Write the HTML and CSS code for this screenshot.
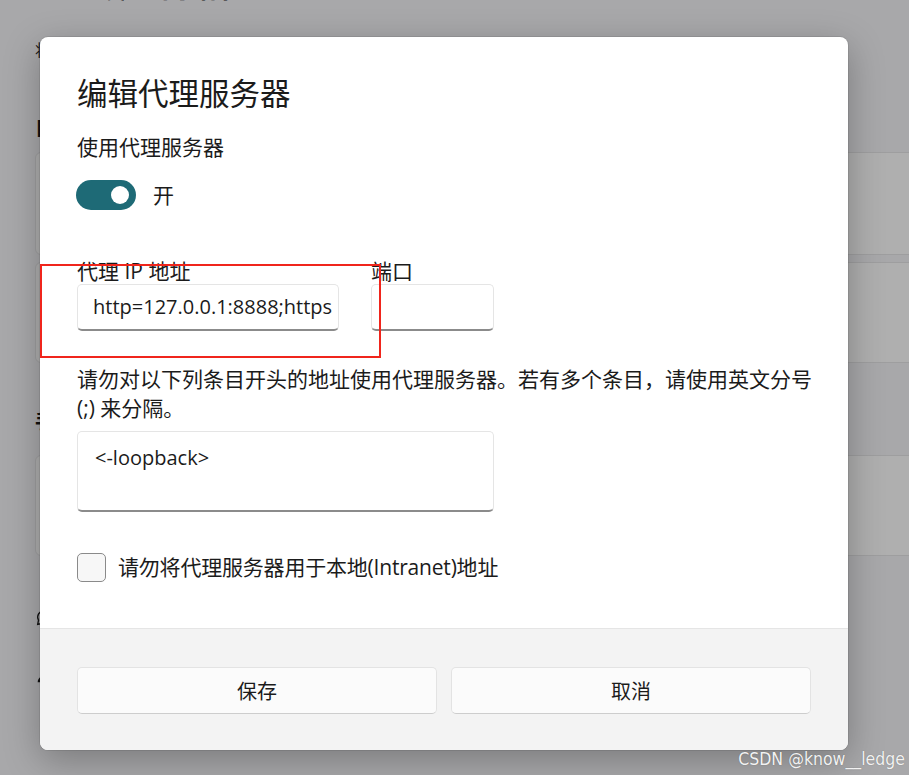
FILE: index.html
```html
<!DOCTYPE html>
<html lang="zh-CN">
<head>
<meta charset="utf-8">
<title>编辑代理服务器</title>
<link rel="stylesheet" href="styles.css">
</head>
<body>
<div class="page">
  <div class="page-title">代理 设置 网络和 Internet</div>
  <p class="page-note">将代理服务器用于以太网或 Wi-Fi 连接。这些设置不适用于 VPN 连接。</p>
  <h2 class="page-h">自动设置代理</h2>
  <div class="cards">
    <div class="card tall"></div>
    <div class="card"></div>
  </div>
  <h2 class="page-h second">手动设置代理</h2>
  <div class="cards third">
    <div class="card"></div>
  </div>
  <div class="links">
    <div class="link">
      <svg class="link-icon" viewBox="0 0 20 20" width="18" height="18"><path d="M10 2a7 7 0 0 0-6.1 10.4L3 17l4.6-.9A7 7 0 1 0 10 2z" fill="none" stroke="#1b1b1b" stroke-width="1.5"/><path d="M8 8a2 2 0 1 1 2.8 1.8c-.6.3-.8.7-.8 1.2" fill="none" stroke="#1b1b1b" stroke-width="1.4"/><circle cx="10" cy="13.3" r=".9" fill="#1b1b1b"/></svg>
      <span>获取帮助</span>
    </div>
    <div class="link">
      <svg class="link-icon" viewBox="0 0 20 20" width="18" height="18"><circle cx="10" cy="6" r="4" fill="#1b1b1b"/><path d="M3 18c0-4 3-6.5 7-6.5s7 2.5 7 6.5z" fill="#1b1b1b"/></svg>
      <span>提供反馈</span>
    </div>
  </div>
</div>

<div class="scrim"></div>

<div class="dialog">
  <div class="dlg-body">
    <h1 class="dlg-title">编辑代理服务器</h1>
    <div class="field-label">使用代理服务器</div>
    <div class="toggle-row">
      <span class="toggle"><span class="knob"></span></span>
      <span class="toggle-text">开</span>
    </div>
    <div class="addr-row">
      <div class="addr-col">
        <div class="lbl">代理 IP 地址</div>
        <div class="input ip">http=127.0.0.1:8888;https</div>
      </div>
      <div class="port-col">
        <div class="lbl">端口</div>
        <div class="input port"></div>
      </div>
    </div>
    <p class="desc">请勿对以下列条目开头的地址使用代理服务器。若有多个条目，请使用英文分号<br>(;) 来分隔。</p>
    <div class="textarea">&lt;-loopback&gt;</div>
    <div class="check-row">
      <span class="checkbox"></span>
      <span class="check-text">请勿将代理服务器用于本地(Intranet)地址</span>
    </div>
  </div>
  <div class="dlg-footer">
    <button class="btn">保存</button>
    <button class="btn">取消</button>
  </div>
</div>

<div class="annot"></div>
<div class="watermark">CSDN @know__ledge</div>
</body>
</html>
```

FILE: styles.css
```css
* { box-sizing: border-box; }

html, body {
  margin: 0;
  padding: 0;
}

body {
  width: 909px;
  height: 775px;
  overflow: hidden;
  position: relative;
  background: #f1f1f4;
  font-family: "Open Sans", "Noto Sans CJK SC", sans-serif;
  color: #1b1b1b;
}

/* ---------- background settings page ---------- */
.page {
  padding-left: 35px;
}

.page-title {
  margin-top: -31px;
  font-size: 28px;
  line-height: 36px;
  font-weight: 600;
  white-space: nowrap;
}

.page-note {
  margin: 35px 0 0;
  font-size: 16px;
  line-height: 20px;
  white-space: nowrap;
}

.page-h {
  margin: 54px 0 0;
  font-size: 20px;
  line-height: 28px;
  font-weight: 600;
}

.page-h.second {
  margin-top: 45px;
}

.cards {
  margin-top: 10px;
  margin-right: -20px;
  display: flex;
  flex-direction: column;
  gap: 7px;
}

.cards.third {
  margin-top: 19px;
}

.card {
  height: 101px;
  background: #fbfbfb;
  border: 1px solid #e2e2e4;
  border-radius: 6px;
}

.card.tall {
  height: 103px;
}

.links {
  margin-top: 50px;
  display: flex;
  flex-direction: column;
  gap: 33px;
}

.link {
  display: flex;
  align-items: center;
  gap: 12px;
  height: 24px;
  font-size: 16px;
}

/* ---------- scrim ---------- */
.scrim {
  position: absolute;
  inset: 0;
  background: rgba(0, 0, 0, 0.3);
}

/* ---------- dialog ---------- */
.dialog {
  position: absolute;
  left: 40px;
  top: 37px;
  width: 808px;
  height: 713px;
  background: #ffffff;
  border-radius: 8px;
  box-shadow: 0 0 0 1px rgba(0, 0, 0, 0.08), 0 10px 36px rgba(0, 0, 0, 0.28);
  display: flex;
  flex-direction: column;
  overflow: hidden;
}

.dlg-body {
  flex: 1;
  padding: 36px 37px 0;
}

.dlg-title {
  margin: 0;
  font-size: 30.5px;
  line-height: 40px;
  font-weight: 400;
  color: #1b1b1b;
}

.field-label {
  margin-top: 20px;
  font-size: 21px;
  line-height: 29px;
}

.toggle-row {
  margin-top: 18px;
  height: 30px;
  display: flex;
  align-items: center;
  gap: 17px;
}

.toggle {
  width: 60px;
  height: 30px;
  border-radius: 15px;
  background: #1e6a76;
  display: flex;
  align-items: center;
  justify-content: flex-end;
  padding-right: 7px;
  margin-left: -1px;
}

.knob {
  width: 18px;
  height: 18px;
  border-radius: 50%;
  background: #ffffff;
}

.toggle-text {
  font-size: 21px;
  line-height: 30px;
}

.addr-row {
  margin-top: 49px;
  display: flex;
  gap: 32px;
}

.lbl {
  font-size: 21px;
  line-height: 25px;
  white-space: nowrap;
}

.input {
  height: 47px;
  background: #ffffff;
  border: 1px solid #e5e5e5;
  border-bottom: 2px solid #8b8b8b;
  border-radius: 5px;
  font-size: 20px;
  line-height: 44px;
  padding: 0 8px 0 15px;
  white-space: nowrap;
  overflow: hidden;
}

.input.ip {
  width: 262px;
}

.input.port {
  width: 123px;
}

.desc {
  margin: 34px 0 0;
  font-size: 21px;
  line-height: 29px;
  white-space: nowrap;
}

.textarea {
  margin-top: 8px;
  width: 417px;
  height: 81px;
  background: #ffffff;
  border: 1px solid #e5e5e5;
  border-bottom: 2px solid #8b8b8b;
  border-radius: 5px;
  padding: 11px 17px;
  font-size: 20px;
  line-height: 29px;
}

.check-row {
  margin-top: 41px;
  display: flex;
  align-items: center;
  gap: 12px;
}

.checkbox {
  width: 29px;
  height: 29px;
  border: 1px solid #8a8a8a;
  border-radius: 5px;
  background: #f7f7f7;
}

.check-text {
  font-size: 21px;
  line-height: 29px;
  letter-spacing: -0.2px;
  white-space: nowrap;
}

.dlg-footer {
  height: 122px;
  border-top: 1px solid #e5e5e5;
  background: #f3f3f3;
  padding: 38px 37px 0;
  display: grid;
  grid-template-columns: 1fr 1fr;
  gap: 14px;
  align-items: start;
}

.btn {
  height: 47px;
  background: #fbfbfb;
  border: 1px solid #e3e3e3;
  border-bottom-color: #cdcdcd;
  border-radius: 5px;
  font-family: inherit;
  font-size: 20px;
  color: #1b1b1b;
}

/* ---------- annotation & watermark ---------- */
.annot {
  position: absolute;
  left: 40px;
  top: 264px;
  width: 341px;
  height: 94px;
  border: 2px solid #f0251c;
}

.watermark {
  position: absolute;
  right: 4px;
  bottom: 6px;
  font-family: "DejaVu Sans Condensed", "Liberation Sans", sans-serif;
  font-size: 17.5px;
  line-height: 20px;
  color: #f2f2f2;
  text-shadow: 0 0 1px rgba(0, 0, 0, 0.35);
}
```
